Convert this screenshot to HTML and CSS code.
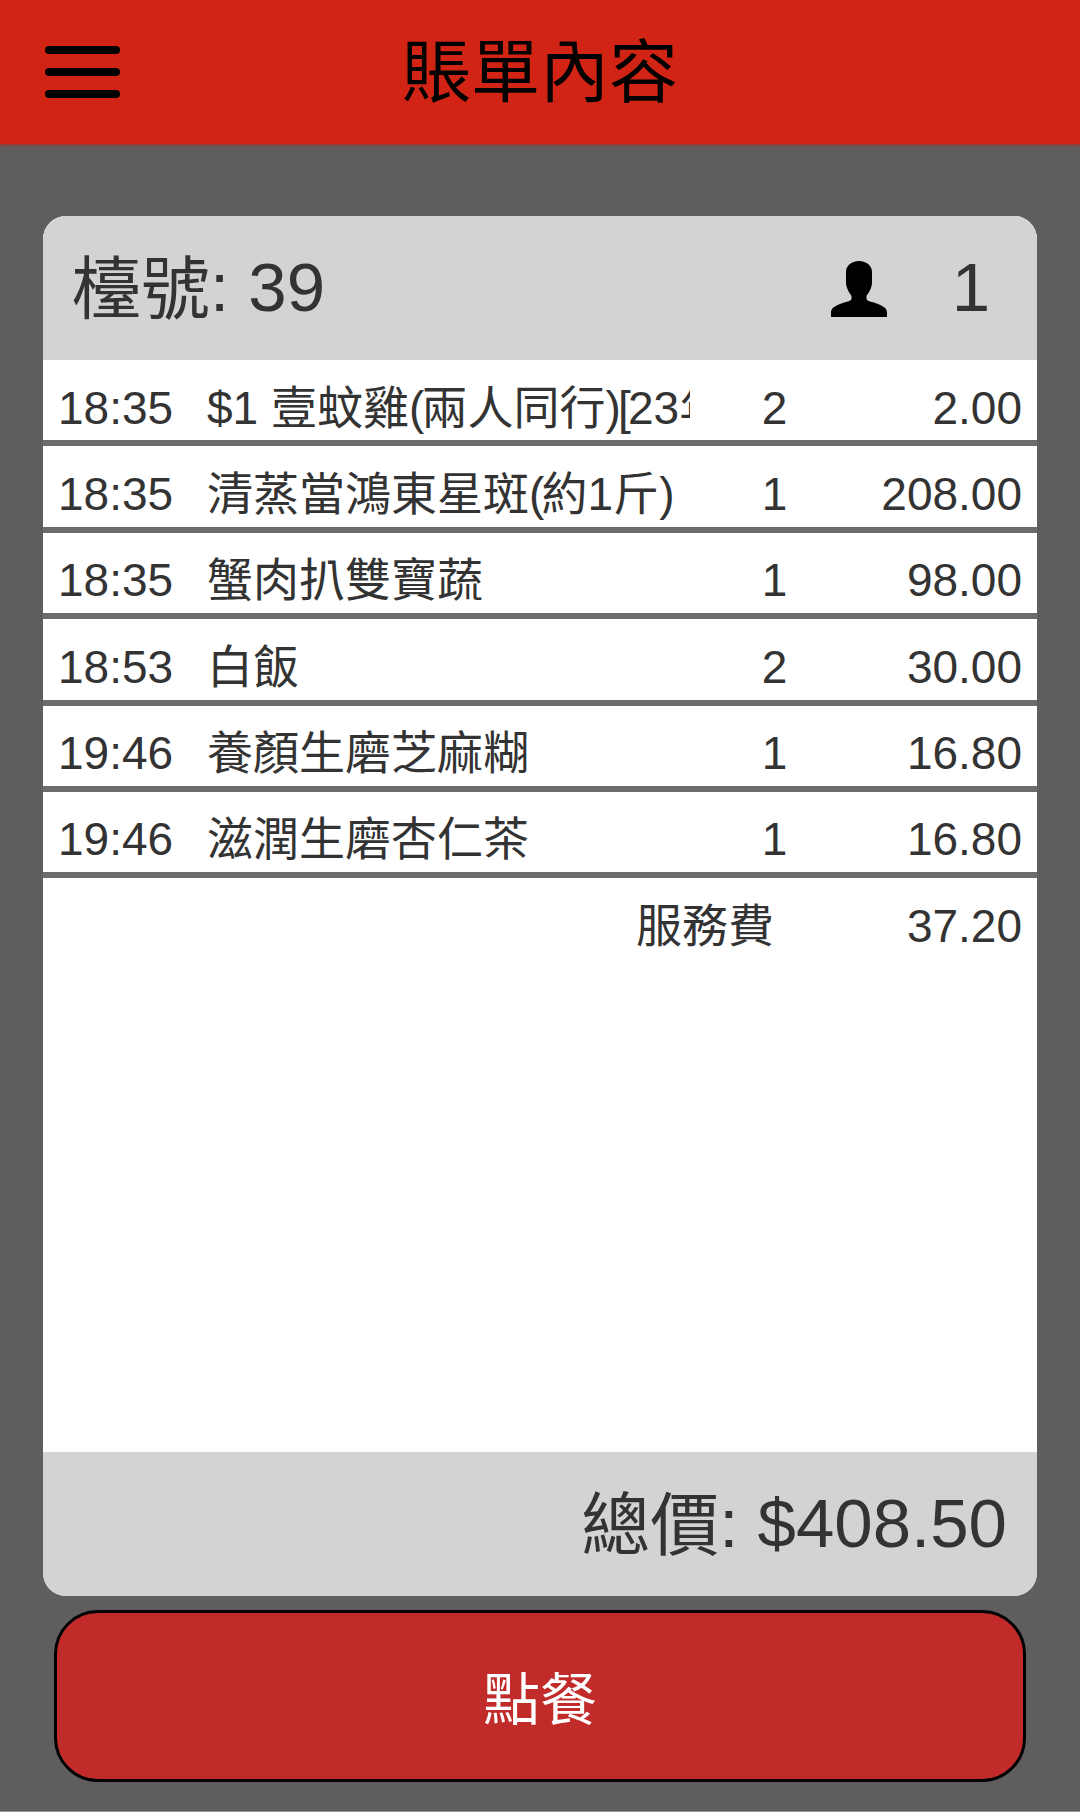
FILE: index.html
```html
<!DOCTYPE html>
<html lang="zh-Hant">
<head>
    <meta charset="UTF-8">
    <meta name="viewport" content="width=device-width, initial-scale=1.0">
    <title>賬單內容</title>
    <link rel="stylesheet" href="styles.css">
</head>
<body>
    <div class="page">
        <header class="header">
            <svg class="menu" viewBox="0 0 76 54">
                <path d="M4 5H71M4 27H71M4 49H71" />
            </svg>
            <h1>賬單內容</h1>
        </header>
        <main class="bill">
            <div class="bill-head">
                <span><span class="zh">檯號</span>: 39</span>
                <svg class="person" viewBox="0 0 56 56">
                    <path d="M28 0C20 0 15 5 15 11V21C15 27 18 31 20.500 35V37C20.500 40 18 40 15 41C8 43 0 46 0 51V56H56V51C56 46 48 43 41 41C38 40 35.500 40 35.500 37V35C38 31 41 27 41 21V11C41 5 36 0 28 0Z" />
                </svg>
                <span class="people">1</span>
            </div>
            <div class="items">
                <div class="row">
                    <span class="time">18:35</span>
                    <span class="name">$1 壹蚊雞<span class="paren">(</span>兩人同行<span class="paren">)[</span>23年</span>
                    <span class="qty">2</span>
                    <span class="price">2.00</span>
                </div>
                <div class="row">
                    <span class="time">18:35</span>
                    <span class="name">清蒸當鴻東星斑<span class="paren">(</span>約1斤<span class="paren">)</span></span>
                    <span class="qty">1</span>
                    <span class="price">208.00</span>
                </div>
                <div class="row">
                    <span class="time">18:35</span>
                    <span class="name">蟹肉扒雙寶蔬</span>
                    <span class="qty">1</span>
                    <span class="price">98.00</span>
                </div>
                <div class="row">
                    <span class="time">18:53</span>
                    <span class="name">白飯</span>
                    <span class="qty">2</span>
                    <span class="price">30.00</span>
                </div>
                <div class="row">
                    <span class="time">19:46</span>
                    <span class="name">養顏生磨芝麻糊</span>
                    <span class="qty">1</span>
                    <span class="price">16.80</span>
                </div>
                <div class="row">
                    <span class="time">19:46</span>
                    <span class="name">滋潤生磨杏仁茶</span>
                    <span class="qty">1</span>
                    <span class="price">16.80</span>
                </div>
                <div class="row service">
                    <span class="label">服務費</span>
                    <span class="price">37.20</span>
                </div>
            </div>
            <div class="bill-total"><span class="zh">總價</span>: $408.50</div>
        </main>
        <button class="order">點餐</button>
    </div>
</body>
</html>
```
FILE: styles.css
```css
* {
    box-sizing: border-box;
}
body {
    margin: 0;
    font-family: "Liberation Sans", "Noto Sans CJK TC", sans-serif;
    color: #333;
    background: #5e5e5e;
}
.page {
    display: flex;
    flex-direction: column;
    height: 1812px;
    border-bottom: 1px solid #999;
}
.header {
    display: grid;
    grid-template-columns: 120px 1fr 120px;
    align-items: center;
    height: 144px;
    flex-shrink: 0;
    background: #d22414;
    box-shadow: 0 1px 3px #b52c20;
}
.header h1 {
    margin: 0;
    padding-top: 3px;
    font-size: 69px;
    font-weight: normal;
    line-height: 141px;
    text-align: center;
    color: #000;
}
.menu {
    width: 76px;
    height: 54px;
    margin-left: 44.500px;
    stroke: #000;
    stroke-width: 8;
    stroke-linecap: round;
}
.bill {
    display: flex;
    flex-direction: column;
    height: 1379.600px;
    margin: 72px 43px 0;
    border-radius: 23px;
    overflow: hidden;
    background: #fff;
}
.bill-head {
    display: flex;
    align-items: center;
    height: 144px;
    padding: 0 29px;
    font-size: 69px;
    line-height: 142px;
    background: #d3d3d3;
}
.zh {
    line-height: 1;
    vertical-align: -3px;
}
.person {
    width: 56px;
    height: 56px;
    margin-left: auto;
    margin-top: 2px;
}
.people {
    width: 121px;
    padding-right: 18px;
    text-align: right;
}
.items {
    flex: 1;
}
.row {
    display: grid;
    grid-template-columns: 149px 483px 169px 1fr;
    height: 86.400px;
    padding: 14.500px 15px 0;
    font-size: 46px;
    line-height: 65px;
    border-bottom: 6px solid #6c6c6c;
}
.row > span {
    height: 65px;
    line-height: 67px;
}
.name {
    overflow: hidden;
    white-space: nowrap;
}
.paren {
    letter-spacing: -2.800px;
}
.qty {
    text-align: center;
}
.price {
    text-align: right;
}
.service {
    border-bottom: none;
}
.service .label {
    grid-column: 1 / 4;
    padding-right: 85px;
    text-align: right;
}
.bill-total {
    height: 144px;
    padding: 0 30px;
    font-size: 69px;
    line-height: 143px;
    text-align: right;
    background: #d3d3d3;
}
.order {
    height: 172.500px;
    margin: 14.400px 54px 0;
    padding-bottom: 4px;
    border: 3px solid #000;
    border-radius: 44px;
    font-family: inherit;
    font-size: 57px;
    color: #fff;
    background: #c12c2b;
    cursor: pointer;
}
```
